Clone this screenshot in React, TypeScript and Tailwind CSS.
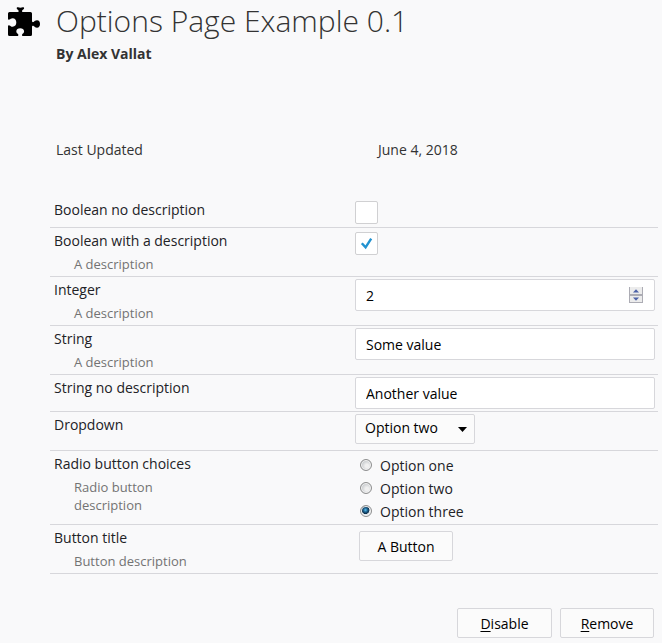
import React, { useState } from "react";

type RowProps = {
  title: string;
  htmlFor?: string;
  description?: string;
  height: string;
  children: React.ReactNode;
};

function Row({ title, htmlFor, description, height, children }: RowProps) {
  return (
    <div className={`flex border-b border-[#d7d7db] ${height}`}>
      <div className="w-[305px] shrink-0 pt-0.5 pl-1">
        {htmlFor ? (
          <label htmlFor={htmlFor} className="block leading-[22px]">
            {title}
          </label>
        ) : (
          <div className="leading-[22px]">{title}</div>
        )}
        {description && (
          <p className="mt-[3px] ml-5 w-32 text-[13px] leading-[18px] text-[#737373]">{description}</p>
        )}
      </div>
      <div className="min-w-0 flex-1">{children}</div>
    </div>
  );
}

function Checkbox({ id, initial }: { id: string; initial: boolean }) {
  const [checked, setChecked] = useState(initial);
  return (
    <div className="mt-1 grid size-[23px]">
      <input
        id={id}
        type="checkbox"
        checked={checked}
        onChange={(e) => setChecked(e.target.checked)}
        className="col-start-1 row-start-1 size-[23px] appearance-none rounded-xs border border-[#d0d0d2] bg-white"
      />
      {checked && (
        <svg viewBox="0 0 23 23" className="pointer-events-none col-start-1 row-start-1 size-[23px]">
          <path d="M6.8 11.2 L10.6 15.4 L16.2 6.6" fill="none" stroke="#2292d0" strokeWidth="2.4" />
        </svg>
      )}
    </div>
  );
}

const fieldClass = "h-8 w-full rounded-xs border border-[#d7d7db] bg-white px-2.5 text-black";
const buttonClass = "h-[30px] rounded-xs border border-[#d7d7db] bg-[#fbfbfb] pt-0.5 text-black";

function NumberField({ id }: { id: string }) {
  const [value, setValue] = useState(2);
  const stepClass = "flex h-2 w-3.5 items-center justify-center border-x border-[#acacb4] bg-[#ececec]";
  return (
    <div className="grid grid-cols-[1fr_14px_12px] items-center">
      <input
        id={id}
        type="number"
        value={value}
        onChange={(e) => setValue(Number(e.target.value))}
        className={`${fieldClass} col-span-3 col-start-1 row-start-1 [appearance:textfield] [&::-webkit-inner-spin-button]:appearance-none`}
      />
      <div className="col-start-2 row-start-1 h-4">
        <button type="button" aria-label="Increase" onClick={() => setValue(value + 1)} className={`${stepClass} border-b`}>
          <svg viewBox="0 0 6 4" className="h-1 w-1.5">
            <path d="M0 3.5 L3 .3 L6 3.5Z" fill="#4d62a8" />
          </svg>
        </button>
        <button type="button" aria-label="Decrease" onClick={() => setValue(value - 1)} className={`${stepClass} border-y`}>
          <svg viewBox="0 0 6 4" className="h-1 w-1.5">
            <path d="M0 .5 L3 3.7 L6 .5Z" fill="#4d62a8" />
          </svg>
        </button>
      </div>
    </div>
  );
}

function Choices() {
  const [selected, setSelected] = useState("Option three");
  return (
    <div role="radiogroup" aria-label="Radio button choices" className="pt-[3px] pl-[5px]">
      {["Option one", "Option two", "Option three"].map((option) => (
        <label key={option} className="flex h-[23px] items-center gap-2">
          <input
            type="radio"
            name="choices"
            checked={selected === option}
            onChange={() => setSelected(option)}
            className="mb-0.5 size-3 appearance-none rounded-full border border-[#8e8f8f] bg-[radial-gradient(circle_at_60%_60%,#f0f0f0_20%,#bfc3c6_75%)] shadow-[inset_0_0_0_1px_#f4f4f4] checked:bg-[radial-gradient(circle_at_45%_40%,#5cc4f0_0%,#1c5f8c_25%,#0d2f4a_45%,#dfe5ea_52%)]"
          />
          {option}
        </label>
      ))}
    </div>
  );
}

export default function App() {
  return (
    <main className="min-h-screen bg-[#f9f9fa] pr-1 pb-[5px] font-['Open_Sans','Noto_Sans',sans-serif] text-sm text-[#222226]">
      <header className="flex gap-[15px] pt-1 pl-2">
        <svg viewBox="0 0 33 30" className="mt-[3px] h-[30px] w-[33px] shrink-0">
          <path
            d="M1.5 5 H9.5 C10.5 5 10.8 4.6 10.6 3.8 C10.3 2.6 8.7 2.4 8.7 1.2 C8.7 .2 9.4 .1 10 .3 C11.5 .8 13.3 .8 14.8 .3 C15.4 .1 16.1 .2 16.1 1.2 C16.1 2.4 14.4 2.6 14.1 3.8 C13.9 4.6 14.2 5 15.2 5 H22.5 Q24 5 24 6.5 V14 C24 15 24.8 15.4 25.6 15 C26.8 14.2 27.4 13.3 29 13.3 C31 13.3 32 15 32 17 C32 19 31 20.7 29 20.7 C27.4 20.7 26.8 19.8 25.6 19 C24.8 18.6 24 19 24 20 V27.5 Q24 29 22.5 29 H15 C14 29 13.9 28.2 14.2 27.2 C14.6 26.2 16.1 26 16.1 24.4 C16.1 22.4 14.4 21.3 12.2 21.3 C10 21.3 8.3 22.4 8.3 24.4 C8.3 26 9.8 26.2 10.2 27.2 C10.5 28.2 10.4 29 9.4 29 H1.5 Q0 29 0 27.5 V19.6 C0 18.6 .6 18.2 1.4 18.4 C2.5 18.8 3 19.7 4.6 19.7 C7 19.7 8.3 17.8 8.3 15.5 C8.3 13.2 7 11.3 4.6 11.3 C3 11.3 2.5 12.3 1.4 12.6 C.6 12.8 0 12.4 0 11.4 V6.5 Q0 5 1.5 5Z"
            fill="#000"
          />
        </svg>
        <div className="text-[#333]">
          <h1 className="text-3xl leading-[34px] font-[350]">Options Page Example 0.1</h1>
          <p className="mt-1.5 leading-5 font-bold">By Alex Vallat</p>
        </div>
      </header>

      <dl className="mt-[76px] flex pl-14 leading-5 text-[#333]">
        <dt className="w-[322px]">Last Updated</dt>
        <dd>June 4, 2018</dd>
      </dl>

      <form className="mt-[37px] pl-[50px]" onSubmit={(e) => e.preventDefault()}>
        <Row title="Boolean no description" htmlFor="bool-plain" height="h-[31px]">
          <Checkbox id="bool-plain" initial={false} />
        </Row>
        <Row title="Boolean with a description" htmlFor="bool-desc" description="A description" height="h-[49px]">
          <Checkbox id="bool-desc" initial={true} />
        </Row>
        <Row title="Integer" htmlFor="integer" description="A description" height="h-[49px]">
          <div className="pt-0.5 pr-[3px]">
            <NumberField id="integer" />
          </div>
        </Row>
        <Row title="String" htmlFor="string" description="A description" height="h-[49px]">
          <div className="pt-0.5 pr-[3px]">
            <input id="string" type="text" defaultValue="Some value" className={fieldClass} />
          </div>
        </Row>
        <Row title="String no description" htmlFor="string-plain" height="h-[37px]">
          <div className="pt-0.5 pr-[3px]">
            <input id="string-plain" type="text" defaultValue="Another value" className={fieldClass} />
          </div>
        </Row>
        <Row title="Dropdown" htmlFor="dropdown" height="h-[39px]">
          <div className="grid w-[120px] items-center pt-0.5">
            <select
              id="dropdown"
              defaultValue="Option two"
              className="col-start-1 row-start-1 h-[30px] appearance-none rounded-xs border border-[#d7d7db] bg-[#fbfbfb] px-[9px] pb-0.5 text-black"
            >
              <option>Option one</option>
              <option>Option two</option>
              <option>Option three</option>
            </select>
            <svg viewBox="0 0 9 5" className="pointer-events-none col-start-1 row-start-1 mr-2 h-[5px] w-[9px] justify-self-end">
              <path d="M0 0 H9 L4.5 5Z" fill="#000" />
            </svg>
          </div>
        </Row>
        <Row title="Radio button choices" description="Radio button description" height="h-[74px]">
          <Choices />
        </Row>
        <Row title="Button title" description="Button description" height="h-[49px]">
          <button type="button" className={`${buttonClass} mt-1.5 ml-1 w-[94px]`}>
            A Button
          </button>
        </Row>
      </form>

      <footer className="mt-[34px] flex justify-end gap-2 pr-1">
        <button type="button" className={`${buttonClass} w-[95px]`}>
          <span className="underline underline-offset-2">D</span>isable
        </button>
        <button type="button" className={`${buttonClass} w-[94px]`}>
          <span className="underline underline-offset-2">R</span>emove
        </button>
      </footer>
    </main>
  );
}
